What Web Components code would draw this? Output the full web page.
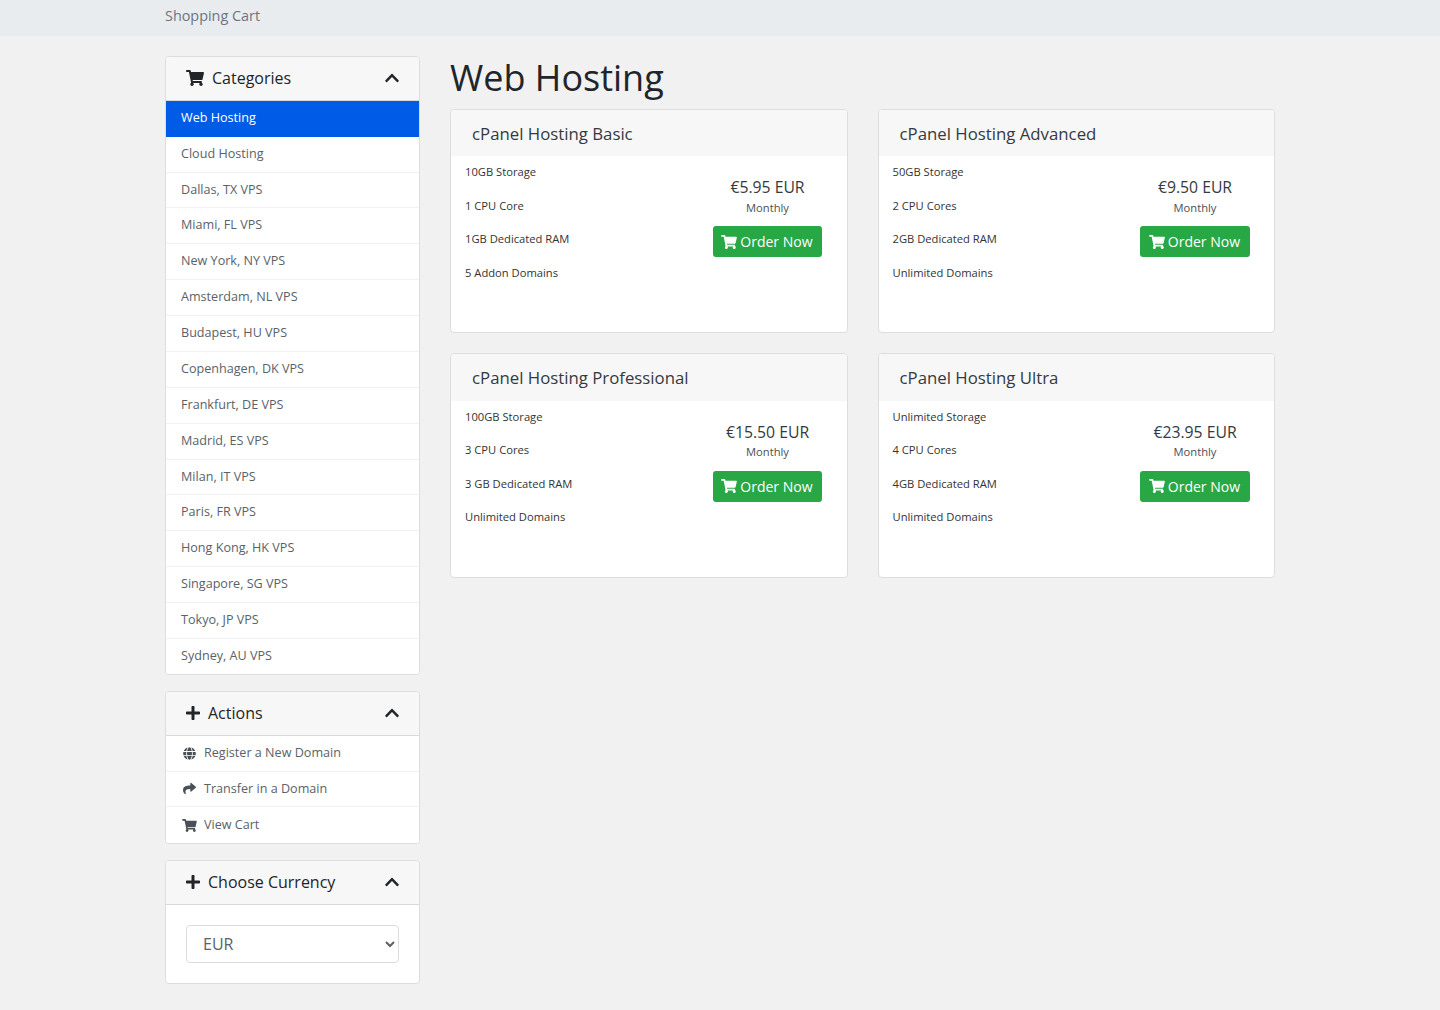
<!DOCTYPE html>
<html lang="en"><head><meta charset="utf-8"><title>Shopping Cart</title>
<style>
html,body{margin:0;padding:0}
body{background:#f1f1f1;font-family:"Open Sans",sans-serif;color:#212529;font-size:14px;height:1010px;overflow:hidden}
</style></head><body>

<cart-page>
  <top-crumb slot="crumb">Shopping Cart</top-crumb>

  <side-panel slot="side" heading="Categories" icon="cart" gap="8">
    <side-link active>Web Hosting</side-link>
    <side-link>Cloud Hosting</side-link>
    <side-link>Dallas, TX VPS</side-link>
    <side-link>Miami, FL VPS</side-link>
    <side-link>New York, NY VPS</side-link>
    <side-link>Amsterdam, NL VPS</side-link>
    <side-link>Budapest, HU VPS</side-link>
    <side-link>Copenhagen, DK VPS</side-link>
    <side-link>Frankfurt, DE VPS</side-link>
    <side-link>Madrid, ES VPS</side-link>
    <side-link>Milan, IT VPS</side-link>
    <side-link>Paris, FR VPS</side-link>
    <side-link>Hong Kong, HK VPS</side-link>
    <side-link>Singapore, SG VPS</side-link>
    <side-link>Tokyo, JP VPS</side-link>
    <side-link style="height:34.98px;border-bottom:0">Sydney, AU VPS</side-link>
  </side-panel>

  <side-panel slot="side" heading="Actions" icon="plus" gap="8">
    <side-link icon="globe">Register a New Domain</side-link>
    <side-link icon="share">Transfer in a Domain</side-link>
    <side-link icon="cart" style="height:35.91px;padding-top:8.2px;border-bottom:0">View Cart</side-link>
  </side-panel>

  <side-panel slot="side" heading="Choose Currency" icon="plus" gap="8">
    <currency-box></currency-box>
  </side-panel>

  <h-title slot="main">Web Hosting</h-title>

  <product-card slot="main" name="cPanel Hosting Basic" price="€5.95 EUR">
    <span>10GB Storage</span><span>1 CPU Core</span><span>1GB Dedicated RAM</span><span>5 Addon Domains</span>
  </product-card>
  <product-card slot="main" name="cPanel Hosting Advanced" price="€9.50 EUR">
    <span>50GB Storage</span><span>2 CPU Cores</span><span>2GB Dedicated RAM</span><span>Unlimited Domains</span>
  </product-card>
  <product-card slot="main" name="cPanel Hosting Professional" price="€15.50 EUR">
    <span>100GB Storage</span><span>3 CPU Cores</span><span>3 GB Dedicated RAM</span><span>Unlimited Domains</span>
  </product-card>
  <product-card slot="main" name="cPanel Hosting Ultra" price="€23.95 EUR">
    <span>Unlimited Storage</span><span>4 CPU Cores</span><span>4GB Dedicated RAM</span><span>Unlimited Domains</span>
  </product-card>
</cart-page>

<script>
const ICONS={
cart:['0 0 576 512','M528.12 301.319l47.273-208C578.806 78.301 567.391 64 551.999 64H159.208l-9.166-44.81C147.758 8.021 137.93 0 126.529 0H24C10.745 0 0 10.745 0 24v16c0 13.255 10.745 24 24 24h69.883l70.248 343.435C147.325 417.1 136 435.222 136 456c0 30.928 25.072 56 56 56s56-25.072 56-56c0-15.674-6.447-29.835-16.824-40h209.647C430.447 426.165 424 440.326 424 456c0 30.928 25.072 56 56 56s56-25.072 56-56c0-22.172-12.888-41.332-31.579-50.405l5.517-24.276c3.413-15.018-8.002-29.319-23.403-29.319H218.117l-6.545-32h293.145c11.206 0 20.92-7.754 23.403-18.681z'],
plus:['0 0 448 512','M416 208H272V64c0-17.67-14.33-32-32-32h-32c-17.67 0-32 14.33-32 32v144H32c-17.67 0-32 14.33-32 32v32c0 17.67 14.33 32 32 32h144v144c0 17.67 14.33 32 32 32h32c17.67 0 32-14.33 32-32V304h144c17.67 0 32-14.33 32-32v-32c0-17.67-14.33-32-32-32z'],
chevron:['0 0 448 512','M240.971 130.524l194.343 194.343c9.373 9.373 9.373 24.569 0 33.941l-22.667 22.667c-9.357 9.357-24.522 9.375-33.901.04L224 227.495 69.255 381.516c-9.379 9.335-24.544 9.317-33.901-.04l-22.667-22.667c-9.373-9.373-9.373-24.569 0-33.941L207.03 130.525c9.372-9.373 24.568-9.373 33.941-.001z'],
share:['0 0 512 512','M503.691 189.836L327.687 37.851C312.281 24.546 288 35.347 288 56.015v80.053C127.371 137.907 0 170.1 0 322.326c0 61.441 39.581 122.309 83.333 154.132 13.653 9.931 33.111-2.533 28.077-18.631C66.066 312.814 132.917 274.316 288 272.085V360c0 20.7 24.3 31.453 39.687 18.164l176.004-152c11.071-9.562 11.086-26.753 0-36.328z'],
globe:['0 0 496 512','M336.5 160C322 70.7 287.8 8 248 8s-74 62.7-88.5 152h177zM152 256c0 22.2 1.2 43.5 3.3 64h185.3c2.1-20.5 3.3-41.8 3.3-64s-1.2-43.5-3.3-64H155.3c-2.1 20.5-3.3 41.8-3.3 64zm324.7-96c-28.6-67.9-86.5-120.4-158-141.6 24.4 33.8 41.2 84.7 50 141.6h108zM177.2 18.4C105.8 39.6 47.8 92.1 19.3 160h108c8.7-56.9 25.5-107.8 49.9-141.6zM487.4 192H372.7c2.1 21 3.3 42.5 3.3 64s-1.2 43-3.3 64h114.6c5.5-20.5 8.6-41.8 8.6-64s-3.1-43.5-8.5-64zM120 256c0-21.5 1.2-43 3.3-64H8.6C3.2 212.5 0 233.8 0 256s3.2 43.5 8.6 64h114.6c-2-21-3.2-42.5-3.2-64zm39.5 96c14.5 89.3 48.7 152 88.5 152s74-62.7 88.5-152h-177zm159.3 141.6c71.4-21.2 129.4-73.7 158-141.6h-108c-8.8 56.9-25.6 107.8-50 141.6zM19.3 352c28.6 67.9 86.5 120.4 158 141.6-24.4-33.8-41.2-84.7-50-141.6h-108z']
};
const svg=(n,w,h)=>`<svg width="${w}" height="${h}" viewBox="${ICONS[n][0]}" fill="currentColor" style="display:block;flex:none" aria-hidden="true"><path d="${ICONS[n][1]}"/></svg>`;
const def=(name,html)=>customElements.define(name,class extends HTMLElement{
  connectedCallback(){ if(this.shadowRoot)return; const r=this.attachShadow({mode:'open'}); r.innerHTML=typeof html==='function'?html(this):html; }
});

def('cart-page',`<style>
:host{display:block}
.top{height:36px;background:#e9ecef}
.wrap{width:1110px;margin:0 auto}
.cols{display:flex;gap:30px;padding-top:20px}
aside{width:255px;flex:none;display:flex;flex-direction:column;gap:16px}
main{flex:1;min-width:0;display:grid;grid-template-columns:397.5px 397.5px;column-gap:30px;row-gap:20px;align-content:start}
::slotted(h-title){grid-column:1/-1;margin-bottom:-20px}
</style>
<div class="top"><div class="wrap"><slot name="crumb"></slot></div></div>
<div class="wrap cols"><aside><slot name="side"></slot></aside><main><slot name="main"></slot></main></div>`);

def('top-crumb',`<style>:host{display:block;font-size:14.4px;line-height:21px;color:#6c757d;padding-top:5px}</style><slot></slot>`);

def('h-title',`<style>:host{display:block;font-size:36px;font-weight:400;line-height:43.2px;color:#212529;height:52.75px}</style><slot></slot>`);

def('side-panel',el=>`<style>
:host{display:block;background:#fff;border:1px solid #ddd;border-radius:4px;overflow:hidden}
header{display:flex;align-items:center;box-sizing:border-box;height:44px;padding:0 20.5px 1.5px 20px;background:#f7f7f7;border-bottom:1px solid #d9d9d9;font-size:16px;color:#212529}
.t{margin-left:${el.getAttribute('gap')}px;flex:1}
.c{display:flex;flex-direction:column}
</style><header>${svg(el.getAttribute('icon'),el.getAttribute('icon')==='cart'?18:14,16)}<span class="t">${el.getAttribute('heading')}</span>${svg('chevron',14,16)}</header><div class="c"><slot></slot></div>`);

def('side-link',el=>`<style>
:host{display:flex;align-items:flex-start;box-sizing:border-box;height:35.89px;padding:8px 15px 0;font-size:12.6px;line-height:18.9px;color:#5a6268;background:#fff;border-bottom:1px solid #f1f1f1}
:host(:first-child){height:35.66px;padding-top:7.77px}
:host([active]){background:#005ce6;color:#fff;border-bottom-color:#005ce6}
.i{width:15px;height:18.9px;margin-right:7px;margin-left:1px;display:flex;justify-content:center;align-items:center;color:#495057}
</style>${el.hasAttribute('icon')?`<span class="i">${svg(el.getAttribute('icon'),el.getAttribute('icon')==='cart'?15:13,13)}</span>`:''}<slot></slot>`);

def('currency-box',`<style>
:host{display:block;padding:20px}
select{display:block;width:100%;height:38px;box-sizing:border-box;border:1px solid #ddd;border-radius:4px;background-color:#fff;color:#5a6268;font:16px "Open Sans",sans-serif;padding:6px 12px}
</style><select aria-label="Choose Currency"><option>EUR</option><option>USD</option></select>`);

def('product-card',el=>`<style>
:host{display:block;box-sizing:border-box;height:224.5px;background:#fff;border:1px solid #ddd;border-radius:4px;overflow:hidden}
header{height:46.25px;box-sizing:border-box;padding:0.6px 21px 0;display:flex;align-items:center;background:#f7f7f7;font-size:16.8px;color:#343a40}
.b{display:flex;padding:8.25px 0 0 14px}
ul{flex:1;display:flex;flex-direction:column;font-size:11.2px;color:#333;line-height:16.8px;gap:16.7px;margin:0;padding:0}
::slotted(span){display:block}
.r{width:158px;flex:none;text-align:center;padding-top:11.8px;display:flex;flex-direction:column;align-items:center}
.p{font-size:15.75px;line-height:23.6px;color:#343a40}
.m{font-size:11.2px;line-height:16.8px;color:#495057;margin-top:.2px;margin-bottom:9.55px}
.btn{display:flex;align-items:center;gap:3px;width:109.2px;height:31px;box-sizing:border-box;padding:0 0 0 8.4px;background:#28a745;color:#fff;border-radius:3px;font-size:14px;white-space:nowrap}
</style><header>${el.getAttribute('name')}</header><div class="b"><ul><slot></slot></ul><div class="r"><div class="p">${el.getAttribute('price')}</div><div class="m">Monthly</div><div class="btn">${svg('cart',16,14)}<span>Order Now</span></div></div></div>`);
</script>
</body></html>
